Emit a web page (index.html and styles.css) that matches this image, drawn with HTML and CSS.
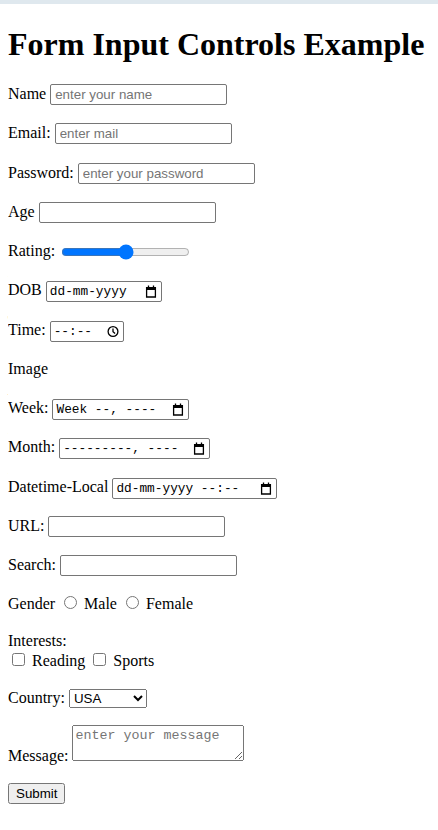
FILE: index.html
```html
<!DOCTYPE html>
<html>
<head>
<meta charset="utf-8">
<title>Form Input Controls Example</title>
<link rel="stylesheet" href="styles.css">
</head>
<body>
<div class="topbar"></div>
<h1>Form Input Controls Example</h1>
<form>
<p class="row"><label>Name <input type="text" class="txt" placeholder="enter your name"></label></p>
<p class="row"><label>Email: <input type="email" class="txt" placeholder="enter mail"></label></p>
<p class="row"><label>Password: <input type="password" class="txt" placeholder="enter your password"></label></p>
<p class="row"><label>Age <input type="number" class="txt"></label></p>
<p class="row"><label>Rating: <input type="range" class="range" min="0" max="10" value="5"></label></p>
<p class="row"><label>DOB <span class="dt w-date"><span class="dt-text">dd-mm-yyyy</span><svg class="ico" viewBox="0 0 12 13" width="12" height="13"><path d="M1.6 2.6h8.8v9.4H1.6z" fill="none" stroke="#000" stroke-width="1.3"/><path d="M1 2h10v3H1z" fill="#000"/><path d="M3.5 0.5v2M8.5 0.5v2" stroke="#000" stroke-width="1.3"/></svg></span></label></p>
<p class="row"><label>Time: <span class="dt w-time"><span class="dt-text">--:--</span><svg class="ico" viewBox="0 0 12 13" width="12" height="13"><circle cx="6" cy="6.5" r="4.9" fill="none" stroke="#000" stroke-width="1.3"/><path d="M6 3.5v3.3l2.1 1.8" fill="none" stroke="#000" stroke-width="1.3"/></svg></span></label></p>
<p class="row">Image</p>
<p class="row"><label>Week: <span class="dt w-week"><span class="dt-text">Week --, ----</span><svg class="ico" viewBox="0 0 12 13" width="12" height="13"><path d="M1.6 2.6h8.8v9.4H1.6z" fill="none" stroke="#000" stroke-width="1.3"/><path d="M1 2h10v3H1z" fill="#000"/><path d="M3.5 0.5v2M8.5 0.5v2" stroke="#000" stroke-width="1.3"/></svg></span></label></p>
<p class="row"><label>Month: <span class="dt w-month"><span class="dt-text">---------, ----</span><svg class="ico" viewBox="0 0 12 13" width="12" height="13"><path d="M1.6 2.6h8.8v9.4H1.6z" fill="none" stroke="#000" stroke-width="1.3"/><path d="M1 2h10v3H1z" fill="#000"/><path d="M3.5 0.5v2M8.5 0.5v2" stroke="#000" stroke-width="1.3"/></svg></span></label></p>
<p class="row"><label>Datetime-Local <span class="dt w-dtl"><span class="dt-text">dd-mm-yyyy --:--</span><svg class="ico" viewBox="0 0 12 13" width="12" height="13"><path d="M1.6 2.6h8.8v9.4H1.6z" fill="none" stroke="#000" stroke-width="1.3"/><path d="M1 2h10v3H1z" fill="#000"/><path d="M3.5 0.5v2M8.5 0.5v2" stroke="#000" stroke-width="1.3"/></svg></span></label></p>
<p class="row"><label>URL: <input type="url" class="txt"></label></p>
<p class="row"><label>Search: <input type="search" class="txt"></label></p>
<p class="row">Gender <label><input type="radio" name="g" class="rad"> Male</label> <label><input type="radio" name="g" class="rad"> Female</label></p>
<p class="interests">Interests:<br><label><input type="checkbox" class="chk"> Reading</label> <label><input type="checkbox" class="chk"> Sports</label></p>
<p class="row"><label>Country: <select class="sel"><option>USA</option><option>India</option><option>UK</option></select></label></p>
<p class="msgrow"><label>Message: <textarea class="msg" placeholder="enter your message"></textarea></label></p>
<p class="btnrow"><button type="button" class="btn">Submit</button></p>
</form>
</body>
</html>
```
FILE: styles.css
```css
html { font-family: "Liberation Serif", "Times New Roman", serif; }
body { margin: 8px; font-size: 16px; color: #000; background: #fff; }
.topbar { position: fixed; top: 0; left: 0; right: 0; height: 4px; background: #dfe8ee; }
h1 { font-size: 32px; font-weight: bold; margin: 18px 0 19px; line-height: 37px; }
.row { margin: 16px 0; height: 23.25px; line-height: 23px; }
.interests { margin: 16px 0; line-height: 18px; }
.msgrow { margin: 16px 0 18px; line-height: normal; }
.btnrow { margin: 16px 0; line-height: normal; }
.txt {
  font-family: "Liberation Sans", Arial, sans-serif;
  font-size: 13.333px;
  width: 177px; height: 21px;
  box-sizing: border-box;
  border: 1px solid #767676; border-radius: 2px;
  padding: 1px 4px;
  margin: 0;
}
.txt::placeholder { color: #757575; }
.dt {
  display: inline-flex; align-items: center; justify-content: space-between;
  box-sizing: border-box; height: 21px;
  border: 1px solid #767676; border-radius: 2px;
  padding: 0 4px 0 3px;
  font-family: "Liberation Mono", monospace; font-size: 12.8px; line-height: 19px;
  color: #000;
}
.dt-text { white-space: pre; }
.ico { flex: none; display: block; }
.w-date { width: 116px; }
.w-time { width: 74px; }
.w-week { width: 137px; }
.w-month { width: 151px; }
.w-dtl { width: 165px; }
.range { width: 129px; vertical-align: middle; accent-color: #0075ff; margin: 2px 2px; }
.sel { font-family: "Liberation Sans", Arial, sans-serif; font-size: 13.333px; width: 78px; height: 19px; }
.msg { font-family: "Liberation Mono", monospace; font-size: 13.333px; width: 172px; height: 36px; box-sizing: border-box; }
.btn { font-family: "Liberation Sans", Arial, sans-serif; font-size: 13.333px; height: 21px; }
```
